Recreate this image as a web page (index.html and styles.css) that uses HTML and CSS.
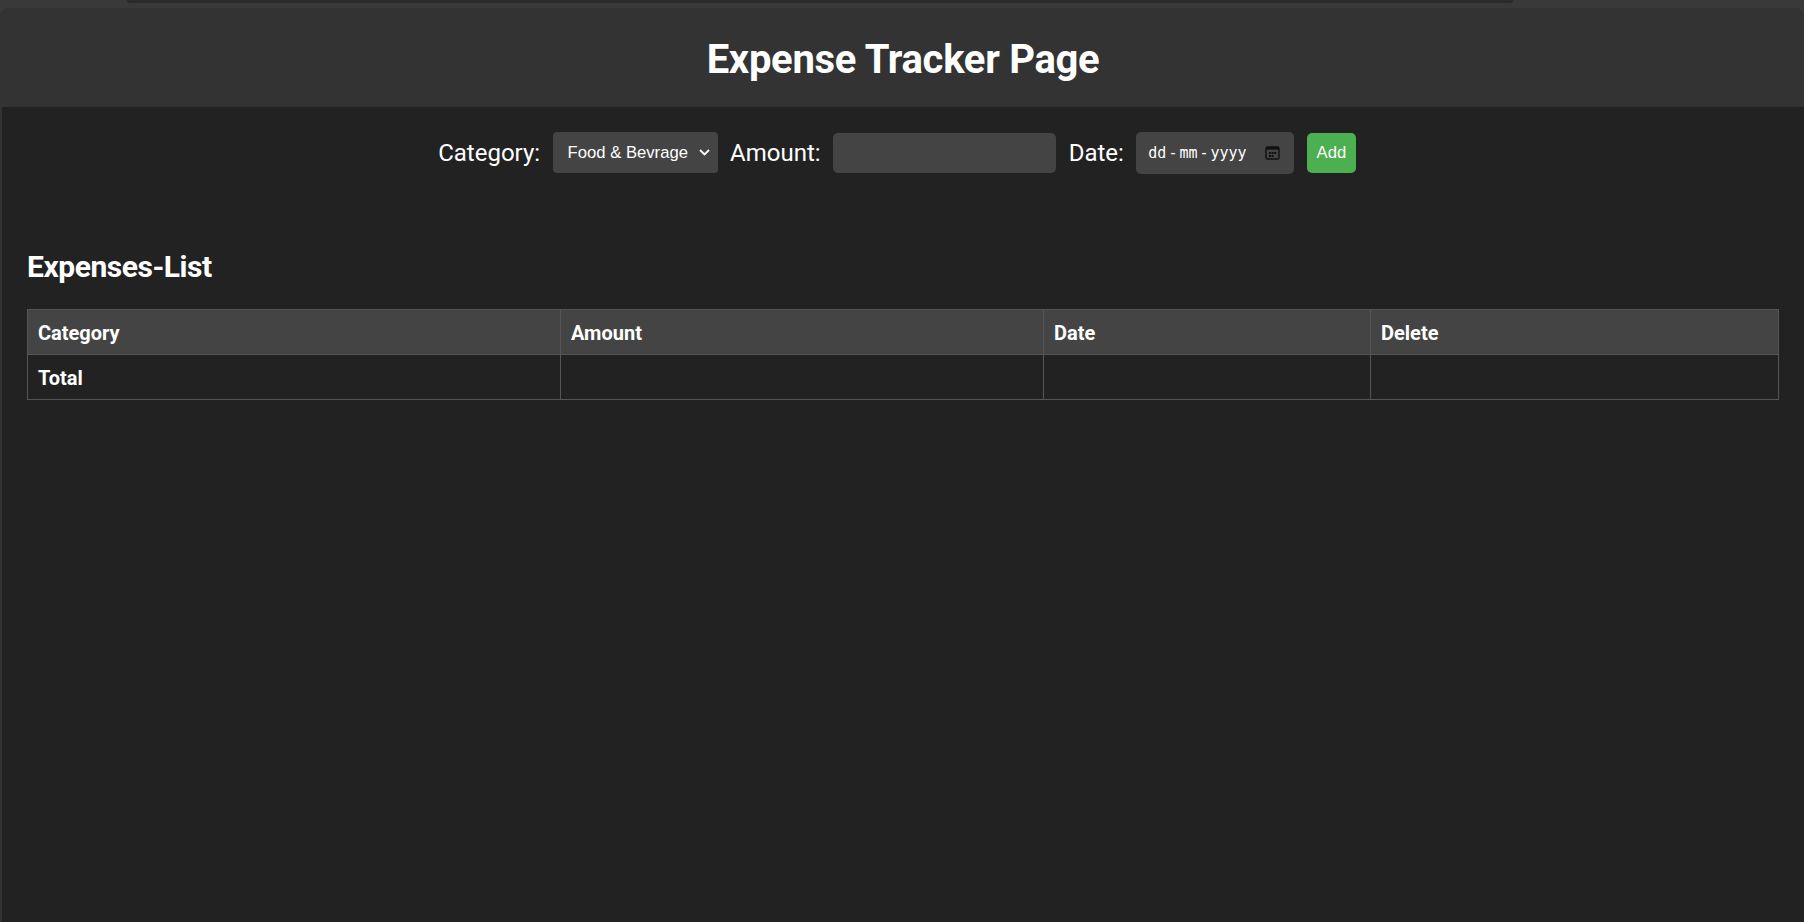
FILE: index.html
```html
<!DOCTYPE html>
<html lang="en">
<head>
<meta charset="utf-8">
<title>Expense Tracker Page</title>
<link rel="stylesheet" href="styles.css">
</head>
<body>
<div class="chrome"><div class="tabbar"></div></div>
<div class="app">
  <header class="header">
    <h1 class="title">Expense Tracker Page</h1>
  </header>
  <main class="content">
    <form class="entry">
      <label class="field-label" for="category">Category:</label>
      <span class="select-wrap">
        <select id="category" class="select">
          <option>Food &amp; Bevrage</option>
          <option>Rent</option>
          <option>Transport</option>
          <option>Relaxing</option>
        </select>
        <svg class="chevron" width="11" height="7" viewBox="0 0 11 7"><path d="M1 1l4.5 4.5L10 1" fill="none" stroke="#fff" stroke-width="1.8"/></svg>
      </span>
      <label class="field-label" for="amount">Amount:</label>
      <input id="amount" class="amount" type="text">
      <label class="field-label" for="date">Date:</label>
      <div id="date" class="date">
        <span class="date-text">dd<span class="sep">-</span>mm<span class="sep">-</span>yyyy</span>
        <svg class="cal" width="15" height="14" viewBox="0 0 15 14">
          <rect x="1" y="1" width="13" height="12" rx="1.5" fill="none" stroke="#111" stroke-width="1.4"/>
          <rect x="1" y="1" width="13" height="2.6" fill="#111"/>
          <rect x="4" y="6" width="2" height="2" fill="#111"/>
          <rect x="6.6" y="6" width="2" height="2" fill="#111"/>
          <rect x="9.2" y="6" width="2" height="2" fill="#111"/>
          <rect x="4" y="9" width="2" height="2" fill="#111"/>
          <rect x="6.6" y="9" width="2" height="2" fill="#111"/>
        </svg>
      </div>
      <button class="add" type="button">Add</button>
    </form>

    <h2 class="list-title">Expenses-List</h2>
    <table class="expenses">
      <colgroup>
        <col class="col-cat">
        <col class="col-amt">
        <col class="col-date">
        <col class="col-del">
      </colgroup>
      <thead>
        <tr><th>Category</th><th>Amount</th><th>Date</th><th>Delete</th></tr>
      </thead>
      <tbody>
        <tr><td class="total">Total</td><td></td><td></td><td></td></tr>
      </tbody>
    </table>
  </main>
</div>
</body>
</html>
```

FILE: styles.css
```css
* { box-sizing: border-box; }

html, body {
  margin: 0;
  padding: 0;
}

body {
  background: #393939;
  font-family: Roboto, "Liberation Sans", Arial, sans-serif;
  color: #fff;
}

.chrome {
  height: 8px;
}

.tabbar {
  margin-left: 127px;
  width: 1386px;
  height: 3px;
  background: #2a2a2a;
  border-radius: 0 0 6px 6px;
}

.app {
  background: #333;
  border-radius: 9px 9px 0 0;
  padding-left: 2px;
  height: 914px;
  display: flex;
  flex-direction: column;
  overflow: hidden;
}

.header {
  background: #333;
  border-radius: 9px 9px 0 0;
  padding: 28px 0 24px;
  text-align: center;
}

.title {
  margin: 0;
  font-size: 40px;
  font-weight: 700;
  line-height: 47px;
  letter-spacing: -0.3px;
}

.content {
  flex: 1;
  background: #222;
  padding: 25px 25px 25px 25px;
}

.entry {
  display: flex;
  align-items: center;
  justify-content: center;
  gap: 12.5px;
  padding-right: 12px;
  height: 41px;
}

.field-label {
  font-size: 24px;
  line-height: 28px;
}

.select-wrap {
  position: relative;
  display: inline-block;
}

.select {
  appearance: none;
  -webkit-appearance: none;
  width: 165px;
  height: 41px;
  background: #444;
  color: #fff;
  border: none;
  border-radius: 4px;
  padding: 0 0 0 15px;
  font-family: "Liberation Sans", Arial, sans-serif;
  font-size: 16.67px;
  outline: none;
}

.chevron {
  position: absolute;
  right: 8px;
  top: 17px;
  pointer-events: none;
}

.amount {
  width: 223px;
  height: 40px;
  background: #444;
  border: none;
  border-radius: 5px;
  color: #fff;
  outline: none;
}

.date {
  width: 158px;
  height: 42px;
  background: #444;
  border-radius: 5px;
  display: flex;
  align-items: center;
  justify-content: space-between;
  padding: 0 14px 0 12px;
}

.date-text {
  font-family: "DejaVu Sans Mono", "Liberation Mono", monospace;
  font-size: 15px;
  color: #fff;
  white-space: nowrap;
}

.sep {
  display: inline-block;
  margin: 0 2px;
}

.cal {
  display: block;
}

.add {
  height: 40px;
  width: 49px;
  padding: 0;
  background: #4caf50;
  color: #fff;
  border: none;
  border-radius: 5px;
  font-family: "Liberation Sans", Arial, sans-serif;
  font-size: 16.67px;
}

.list-title {
  margin: 76px 0 25px;
  font-size: 30px;
  line-height: 35px;
  font-weight: 700;
  letter-spacing: -0.45px;
}

.expenses {
  width: 100%;
  border-collapse: collapse;
  border: 1px solid #555;
  table-layout: fixed;
}

.col-cat { width: 533px; }
.col-amt { width: 483px; }
.col-date { width: 327px; }
.col-del { width: auto; }

.expenses th,
.expenses td {
  border: 1px solid #555;
  padding: 11.5px 10px 8.5px;
  font-size: 20px;
  line-height: 23.5px;
  text-align: left;
  height: 45px;
}

.expenses th {
  background: #444;
  font-weight: 700;
}

.expenses td.total {
  font-weight: 700;
}
```
